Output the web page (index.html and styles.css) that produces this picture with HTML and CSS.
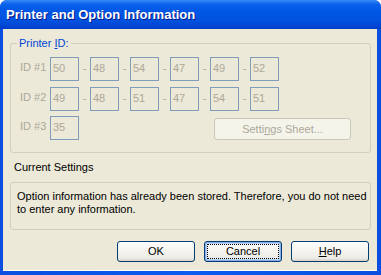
FILE: index.html
```html
<!doctype html>
<html lang="en">
<head>
	<meta charset="UTF-8">
	<title>Printer and Option Information</title>
	<link rel="stylesheet" href="styles.css">
</head>
<body>
	<div class="window">
		<div class="titlebar">Printer and Option Information</div>
		<div class="client">
			<div class="group">
				<span class="group-label">Printer <u>I</u>D:</span>
				<div class="id-row">
					<span class="id-label">ID #1</span>
					<span class="box">50</span><span class="dash">-</span>
					<span class="box">48</span><span class="dash">-</span>
					<span class="box">54</span><span class="dash">-</span>
					<span class="box">47</span><span class="dash">-</span>
					<span class="box">49</span><span class="dash">-</span>
					<span class="box">52</span>
				</div>
				<div class="id-row">
					<span class="id-label">ID #2</span>
					<span class="box">49</span><span class="dash">-</span>
					<span class="box">48</span><span class="dash">-</span>
					<span class="box">51</span><span class="dash">-</span>
					<span class="box">47</span><span class="dash">-</span>
					<span class="box">54</span><span class="dash">-</span>
					<span class="box">51</span>
				</div>
				<div class="id-row">
					<span class="id-label">ID #3</span>
					<span class="box">35</span>
					<button class="btn btn-sheet" disabled>Setti<u>n</u>gs Sheet...</button>
				</div>
			</div>
			<div class="caption">Current Settings</div>
			<div class="info">Option information has already been stored. Therefore, you do not need to enter any information.</div>
			<div class="actions">
				<button class="btn">OK</button>
				<button class="btn btn-focus"><span>Cancel</span></button>
				<button class="btn"><u>H</u>elp</button>
			</div>
		</div>
	</div>
</body>
</html>
```
FILE: styles.css
```css
*{
	box-sizing:border-box;
}
body,div,span,button{
	margin:0;
	padding:0;
}
body{
	background:#fff;
	font:11px/13px "Liberation Sans", Arial, sans-serif;
	color:#000;
}
.window{
	width:381px;
	height:275px;
	display:flex;
	flex-direction:column;
	background:linear-gradient(90deg, #0a4fe0, #0b5cf0 50%, #0a4fe0);
	border-radius:7px 7px 0 0;
	overflow:hidden;
}
.titlebar{
	height:29px;
	flex:none;
	padding:1px 0 0 6px;
	font:bold 13px/28px "Liberation Sans", Arial, sans-serif;
	color:#fff;
	text-shadow:1px 1px #0a1883;
	background:linear-gradient(#3a8cf6 0, #2377f4 2px, #0c63ec 4px, #0058e6 10px, #0053df 20px, #0046d5 26px, #003dc6 29px);
}
.client{
	flex:1;
	margin:0 4px 4px 3px;
	background:#ece9d8;
	border-bottom:1px solid #fffff4;
	display:flex;
	flex-direction:column;
}
.group{
	position:relative;
	margin:14px 6px 0 7px;
	height:110px;
	border:1px solid #d0d0bf;
	border-radius:3px;
	padding:13px 0 0 9px;
	display:flex;
	flex-direction:column;
	gap:5.5px;
}
.group-label{
	position:absolute;
	top:-7px;
	left:6px;
	padding:0 2px;
	background:#ece9d8;
	color:#0046d5;
}
.id-row{
	display:flex;
	align-items:flex-start;
	color:#aca899;
}
.id-label{
	width:30px;
	line-height:20px;
}
.box{
	width:29px;
	height:24px;
	border:1px solid #7f9db9;
	padding:0 0 0 2px;
	line-height:20px;
}
.dash{
	width:11px;
	text-align:center;
	line-height:22px;
}
.btn{
	height:21px;
	width:78px;
	border:1px solid #003c74;
	border-radius:3px;
	background:linear-gradient(#fff 0, #f6f5f0 40%, #ecebe6 85%, #d6d0c5 100%);
	font:11px "Liberation Sans", Arial, sans-serif;
	color:#000;
}
.btn-sheet{
	width:137px;
	height:22px;
	margin:2px 19px 0 auto;
	border-color:#c9c7ba;
	background:#f5f4ea;
	color:#aca899;
}
.btn-focus{
	padding:2px;
	box-shadow:inset 0 0 0 1px #89ade4, inset 0 0 0 2px #bcd4f6;
}
.btn-focus span{
	display:block;
	line-height:15px;
	outline:1px dotted #000;
	outline-offset:-1px;
}
.caption{
	margin:8px 0 0 11px;
}
.info{
	margin:7.5px 6px 0 7px;
	height:48px;
	border:1px solid #d0d0bf;
	border-radius:3px;
	padding:7px 3px 0 6px;
}
.actions{
	display:flex;
	justify-content:flex-end;
	gap:9px;
	margin:11px 8px 0 0;
}
```
